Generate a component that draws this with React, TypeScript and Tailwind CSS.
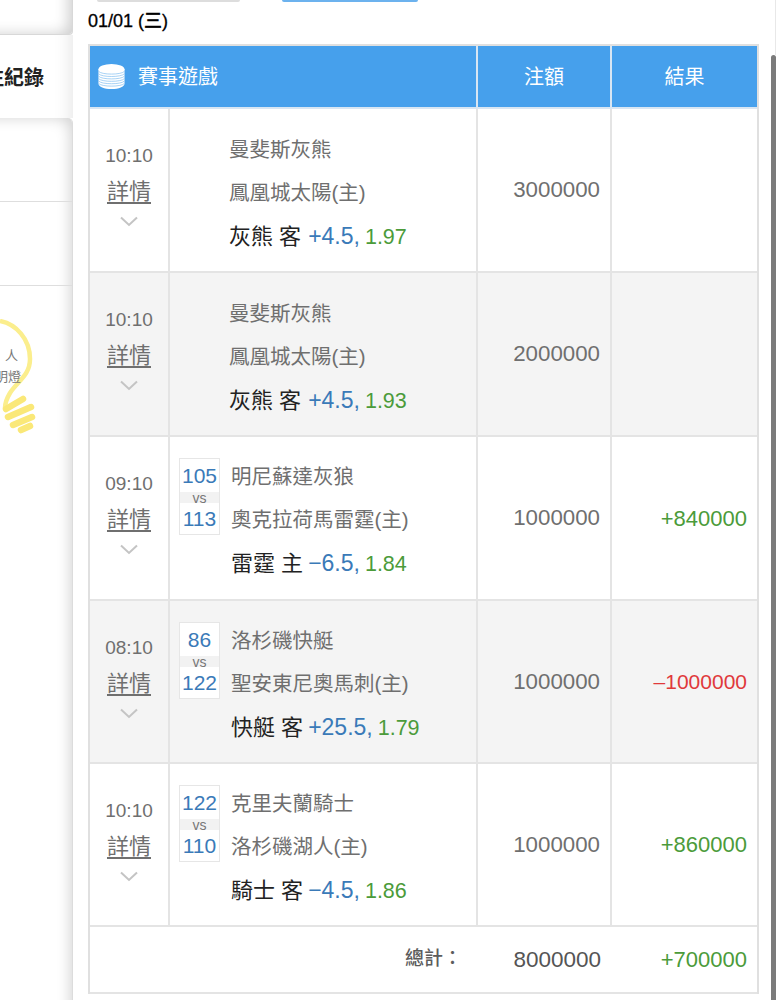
import React from "react";

const FONT = "font-['Liberation_Sans','Noto_Sans_CJK_TC',sans-serif]";
const GREY = "text-[#6f6f6f]";

type Row = {
  time: string;
  a: string;
  b: string;
  pick: string;
  line: string;
  odds: string;
  stake: string;
  result?: string;
  resultClass?: string;
  s1?: string;
  s2?: string;
  shade?: boolean;
  h: string;
};

const rows: Row[] = [
  { time: "10:10", a: "曼斐斯灰熊", b: "鳳凰城太陽(主)", pick: "灰熊 客", line: "+4.5,", odds: "1.97", stake: "3000000", h: "h-[164px]" },
  { time: "10:10", a: "曼斐斯灰熊", b: "鳳凰城太陽(主)", pick: "灰熊 客", line: "+4.5,", odds: "1.93", stake: "2000000", shade: true, h: "h-[164px]" },
  { time: "09:10", a: "明尼蘇達灰狼", b: "奧克拉荷馬雷霆(主)", pick: "雷霆 主", line: "−6.5,", odds: "1.84", stake: "1000000", result: "+840000", resultClass: "text-[22px] text-[#4b9b3a]", s1: "105", s2: "113", h: "h-[164px]" },
  { time: "08:10", a: "洛杉磯快艇", b: "聖安東尼奧馬刺(主)", pick: "快艇 客", line: "+25.5,", odds: "1.79", stake: "1000000", result: "–1000000", resultClass: "text-[21px] text-[#e0393b]", s1: "86", s2: "122", shade: true, h: "h-[163px]" },
  { time: "10:10", a: "克里夫蘭騎士", b: "洛杉磯湖人(主)", pick: "騎士 客", line: "−4.5,", odds: "1.86", stake: "1000000", result: "+860000", resultClass: "text-[22px] text-[#4b9b3a]", s1: "122", s2: "110", h: "h-[163px]" },
];

function Chevron() {
  return (
    <svg width="18" height="11" viewBox="0 0 18 11" className="mt-[13px]" fill="none" stroke="#c4c4c4" strokeWidth="2">
      <path d="M1 1.5 L9 9 L17 1.5" />
    </svg>
  );
}

function Coins() {
  const ys = [8, 10.5, 13, 15.5, 18, 20.5];
  return (
    <svg width="27" height="27" viewBox="0 0 28 27" className="shrink-0">
      <ellipse cx="14" cy="6" rx="13.5" ry="5.5" fill="#fff" />
      <path d="M0.5 6 V21 C0.5 24 6.5 26.5 14 26.5 C21.5 26.5 27.5 24 27.5 21 V6 Z" fill="#fff" />
      {ys.map((y) => (
        <path key={y} d={`M0.5 ${y} C3 ${y + 4} 25 ${y + 4} 27.5 ${y}`} stroke="#8cc4f2" strokeWidth="0.8" fill="none" />
      ))}
    </svg>
  );
}

function Bulb() {
  return (
    <svg width="40" height="120" viewBox="0 0 40 120" className="absolute left-0 top-[33px]" fill="none">
      <path d="M0 2 C16 5 30 20 30 40 C30 56 18 62 10 74 C7 79 5 84 5 89" stroke="#fbee8d" strokeWidth="4.5" />
      <g stroke="#fae878" strokeWidth="6.5" strokeLinecap="round">
        <path d="M6 90 L23 80" />
        <path d="M8 98 L31 88" />
        <path d="M13 106 L32 98" />
        <path d="M21 111 L30 107" />
      </g>
    </svg>
  );
}

function Sidebar() {
  return (
    <div className="flex h-[1000px] w-[73px] shrink-0 flex-col overflow-hidden">
      <div className="h-[35px] shrink-0 rounded-br-[4px] border-r border-b border-[#d8d8d8] bg-white shadow-[inset_-14px_-10px_14px_-10px_#d0d0d0]" />
      <div className="flex h-[83px] shrink-0 items-center justify-end bg-white pr-[29px] pt-[3px] shadow-[inset_-20px_0_18px_-18px_#e4e4e4]">
        <span className="whitespace-nowrap text-[20px] font-bold text-[#222]">投注紀錄</span>
      </div>
      <div className="flex min-h-0 flex-1 flex-col rounded-tr-[5px] border-r border-[#dcdcdc] bg-white shadow-[inset_-14px_12px_14px_-12px_#d4d4d4]">
        <div className="h-[84px] shrink-0 border-b border-[#dedede]" />
        <div className="h-[84px] shrink-0 border-b border-[#dedede]" />
        <div className="relative flex-1">
          <Bulb />
          <div className="relative flex flex-col items-end pr-[51px] pt-[59px] text-[13px] leading-[21px] text-[#777]">
            <span className="mr-[3px]">人</span>
            <span className="flex w-[21px] justify-end overflow-hidden whitespace-nowrap">
              <span className="shrink-0">明燈</span>
            </span>
          </div>
        </div>
      </div>
    </div>
  );
}

function Scores({ s1, s2 }: { s1: string; s2: string }) {
  return (
    <div className="mr-[11px] mt-[-4px] flex h-[77px] w-[41px] shrink-0 flex-col border border-[#e6e6e6] bg-white text-center text-[#3a7ab8]">
      <div className="flex h-[33px] items-center justify-center text-[21px]">{s1}</div>
      <div className="flex h-[11px] items-center justify-center bg-[#f2f2f2] text-[14px] leading-none text-[#777]">vs</div>
      <div className="flex h-[31px] items-center justify-center text-[21px]">{s2}</div>
    </div>
  );
}

function TableRow({ r }: { r: Row }) {
  return (
    <div className={`flex ${r.h} border-b-2 border-[#e4e4e4] ${r.shade ? "bg-[#f4f4f4]" : "bg-white"}`}>
      <div className={`flex w-[80px] shrink-0 flex-col items-center border-r-2 border-[#e4e4e4] pt-[35px] ${GREY}`}>
        <span className="text-[19px] leading-[24px]">{r.time}</span>
        <span className="mt-[13px] text-[22px] leading-[22px] underline underline-offset-[3px]">詳情</span>
        <Chevron />
      </div>
      <div className={`flex w-[308px] shrink-0 border-r-2 border-[#e4e4e4] ${r.s1 ? "pt-[25px]" : "pt-[26px]"}`}>
        <div className={`flex flex-col ${r.s1 ? "pl-[9px]" : "pl-[59px]"}`}>
          <div className="flex">
            {r.s1 && r.s2 ? <Scores s1={r.s1} s2={r.s2} /> : null}
            <div className={`flex flex-col text-[20.5px] ${GREY}`}>
              <span className="h-[43px] leading-[30px]">{r.a}</span>
              <span className="leading-[30px]">{r.b}</span>
            </div>
          </div>
          <div className={`mt-[13px] flex items-baseline whitespace-nowrap text-[21.5px] leading-[30px] text-[#222] ${r.s1 ? "pl-[52px]" : ""}`}>
            <span className={`text-[22px] ${r.s1 ? "mr-[5px]" : "mr-[7px]"}`}>{r.pick}</span>
            <span className="mr-[5px] text-[23px] text-[#3a7ab8]">{r.line}</span>
            <span className="text-[#4b9b3a]">{r.odds}</span>
          </div>
        </div>
      </div>
      <div className={`flex w-[134px] shrink-0 items-center justify-end border-r-2 border-[#e4e4e4] pr-[10px] text-[22.3px] ${GREY}`}>{r.stake}</div>
      <div className={`flex flex-1 items-center justify-end pr-[10px] ${r.resultClass ?? ""}`}>{r.result}</div>
    </div>
  );
}

function Table() {
  return (
    <div className="w-[671px] border-x-2 border-t-2 border-[#e0e0e0]">
      <div className="flex h-[63px] border-b-2 border-[#d8e6f3] bg-[#46a0ec] text-[20px] text-white">
        <div className="flex w-[388px] shrink-0 items-center gap-[13px] border-r-2 border-[#d8e6f3] pl-[8px]">
          <Coins />
          <span>賽事遊戲</span>
        </div>
        <div className="flex w-[134px] shrink-0 items-center justify-center border-r-2 border-[#d8e6f3]">注額</div>
        <div className="flex flex-1 items-center justify-center">結果</div>
      </div>
      {rows.map((r, i) => (
        <TableRow key={i} r={r} />
      ))}
      <div className="flex h-[67px] items-center border-b-2 border-[#e4e4e4] bg-white">
        <div className="w-[388px] shrink-0 pr-[16px] text-right text-[19px] font-medium text-[#5c5c5c]">總計：</div>
        <div className="w-[134px] shrink-0 pr-[11px] text-right text-[22.5px] text-[#555]">8000000</div>
        <div className="flex-1 pr-[10px] text-right text-[22px] text-[#4b9b3a]">+700000</div>
      </div>
    </div>
  );
}

export default function App() {
  return (
    <div className={`relative flex h-[1000px] w-[784px] overflow-hidden bg-white ${FONT}`}>
      <Sidebar />
      <div className="ml-[15px] flex flex-col">
        <div className="flex h-[2px]">
          <div className="ml-[9px] h-[2px] w-[143px] rounded-b bg-[#dddddd]" />
          <div className="ml-[42px] h-[2px] w-[136px] rounded-b bg-[#6cb2ee]" />
        </div>
        <div className="flex h-[42px] items-start pt-[6px] text-[18px] leading-[26px] font-medium text-black [-webkit-text-stroke:0.3px_black]">01/01 (三)</div>
        <Table />
      </div>
      <div className="absolute left-[775px] top-0 h-[55px] w-px bg-[#e8e8e8]" />
      <div className="absolute left-[771px] top-[55px] h-[945px] w-[5px] rounded-t-full bg-[#7b7b7b]" />
    </div>
  );
}
